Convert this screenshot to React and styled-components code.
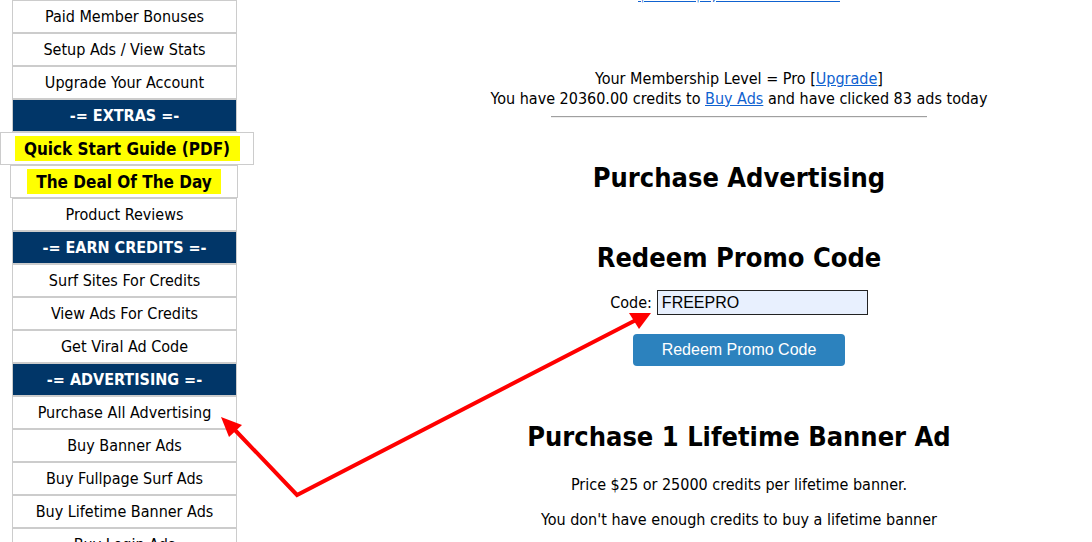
import React from "react";
import styled, { createGlobalStyle } from "styled-components";

const Global = createGlobalStyle`
  html, body { margin: 0; padding: 0; background: #fff; overflow: hidden; }
  body { font-family: "DejaVu Sans Condensed", "DejaVu Sans", sans-serif; color: #000; }
`;

const Page = styled.div`
  position: relative;
  display: flex;
  align-items: flex-start;
  width: 1092px;
  height: 542px;
  overflow: hidden;
`;

const Sidebar = styled.nav`
  display: flex;
  flex-direction: column;
  width: 254px;
  flex: none;
`;

const Item = styled.a`
  display: flex;
  align-items: center;
  justify-content: center;
  box-sizing: border-box;
  height: 33px;
  margin: ${p => (p.$wide ? "0" : p.$shift ? "0 16px 0 10px" : "0 17px 0 12px")};
  border: 1px solid #cccccc;
  background: ${p => (p.$header ? "#013668" : "#fff")};
  color: ${p => (p.$header ? "#fff" : "#000")};
  font-size: 16px;
  font-weight: ${p => (p.$header ? 700 : 400)};
  text-decoration: none;
  white-space: nowrap;
`;

const Highlight = styled.span`
  display: flex;
  align-items: center;
  justify-content: center;
  box-sizing: border-box;
  height: 25px;
  width: ${p => p.$w}px;
  background: #ffff00;
  font-weight: 700;
  font-size: 17px;
`;

const Main = styled.main`
  flex: 1;
  display: flex;
  flex-direction: column;
  align-items: center;
  padding-left: 132px;
  text-align: center;
  font-size: 16px;
`;

const TopLink = styled.a`
  margin-top: -15px;
  line-height: 20px;
  color: #0f62d0;
`;

const Status = styled.div`
  margin-top: 64px;
  line-height: 20px;
`;

const Link = styled.a`
  color: #0f62d0;
  text-decoration: underline;
`;

const Rule = styled.hr`
  width: 376px;
  margin: 7px 0 0;
  border: 0;
  border-top: 1px solid #a0a0a0;
  border-bottom: 1px solid #eeeeee;
`;

const Heading = styled.h2`
  margin: ${p => p.$mt}px 0 0;
  font-size: 27px;
  line-height: 32px;
  font-weight: 700;
`;

const CodeRow = styled.form`
  display: flex;
  flex-direction: column;
  align-items: center;
  margin-top: 16px;
`;

const Field = styled.label`
  display: flex;
  align-items: center;
  gap: 5px;
  font-size: 16px;
`;

const Input = styled.input`
  box-sizing: border-box;
  width: 211px;
  height: 25px;
  padding: 0 4px;
  border: 1px solid #222;
  background: #e8f0fe;
  font-family: "Liberation Sans", Arial, sans-serif;
  font-size: 16px;
  color: #000;
`;

const Button = styled.button`
  margin-top: 19px;
  width: 212px;
  height: 32px;
  border: 0;
  border-radius: 4px;
  background: #2c82be;
  color: #fff;
  font-family: "Liberation Sans", Arial, sans-serif;
  font-size: 16px;
`;

const Para = styled.p`
  margin: ${p => p.$mt}px 0 0;
  line-height: 20px;
`;

const Overlay = styled.svg`
  position: absolute;
  left: 0;
  top: 0;
  pointer-events: none;
`;

const plain = [
  "Paid Member Bonuses",
  "Setup Ads / View Stats",
  "Upgrade Your Account",
];

export default function App() {
  return (
    <Page>
      <Global />
      <Sidebar>
        {plain.map(t => (
          <Item key={t} href="#">{t}</Item>
        ))}
        <Item $header>-= EXTRAS =-</Item>
        <Item $wide href="#"><Highlight $w={225}>Quick Start Guide (PDF)</Highlight></Item>
        <Item $shift href="#"><Highlight $w={194}>The Deal Of The Day</Highlight></Item>
        <Item href="#">Product Reviews</Item>
        <Item $header>-= EARN CREDITS =-</Item>
        <Item href="#">Surf Sites For Credits</Item>
        <Item href="#">View Ads For Credits</Item>
        <Item href="#">Get Viral Ad Code</Item>
        <Item $header>-= ADVERTISING =-</Item>
        <Item href="#">Purchase All Advertising</Item>
        <Item href="#">Buy Banner Ads</Item>
        <Item href="#">Buy Fullpage Surf Ads</Item>
        <Item href="#">Buy Lifetime Banner Ads</Item>
        <Item href="#">Buy Login Ads</Item>
      </Sidebar>
      <Main>
        <TopLink href="#">$1.00 - $2,500 Free Credits!</TopLink>
        <Status>
          Your Membership Level = Pro [<Link href="#">Upgrade</Link>]
          <br />
          You have 20360.00 credits to <Link href="#">Buy Ads</Link> and have clicked 83 ads today
        </Status>
        <Rule />
        <Heading $mt={44}>Purchase Advertising</Heading>
        <Heading $mt={48}>Redeem Promo Code</Heading>
        <CodeRow onSubmit={e => e.preventDefault()}>
          <Field>
            Code: <Input defaultValue="FREEPRO" />
          </Field>
          <Button type="submit">Redeem Promo Code</Button>
        </CodeRow>
        <Heading $mt={55}>Purchase 1 Lifetime Banner Ad</Heading>
        <Para $mt={22}>Price $25 or 25000 credits per lifetime banner.</Para>
        <Para $mt={15}>You don't have enough credits to buy a lifetime banner</Para>
      </Main>
      <Overlay width="1092" height="542" viewBox="0 0 1092 542">
        <polyline points="234,429 297,495 636,320" fill="none" stroke="#f00" strokeWidth="4" strokeLinejoin="miter" />
        <polygon points="221,417 242,425 229,437" fill="#f00" />
        <polygon points="651,313 629,313 639,329" fill="#f00" />
      </Overlay>
    </Page>
  );
}
